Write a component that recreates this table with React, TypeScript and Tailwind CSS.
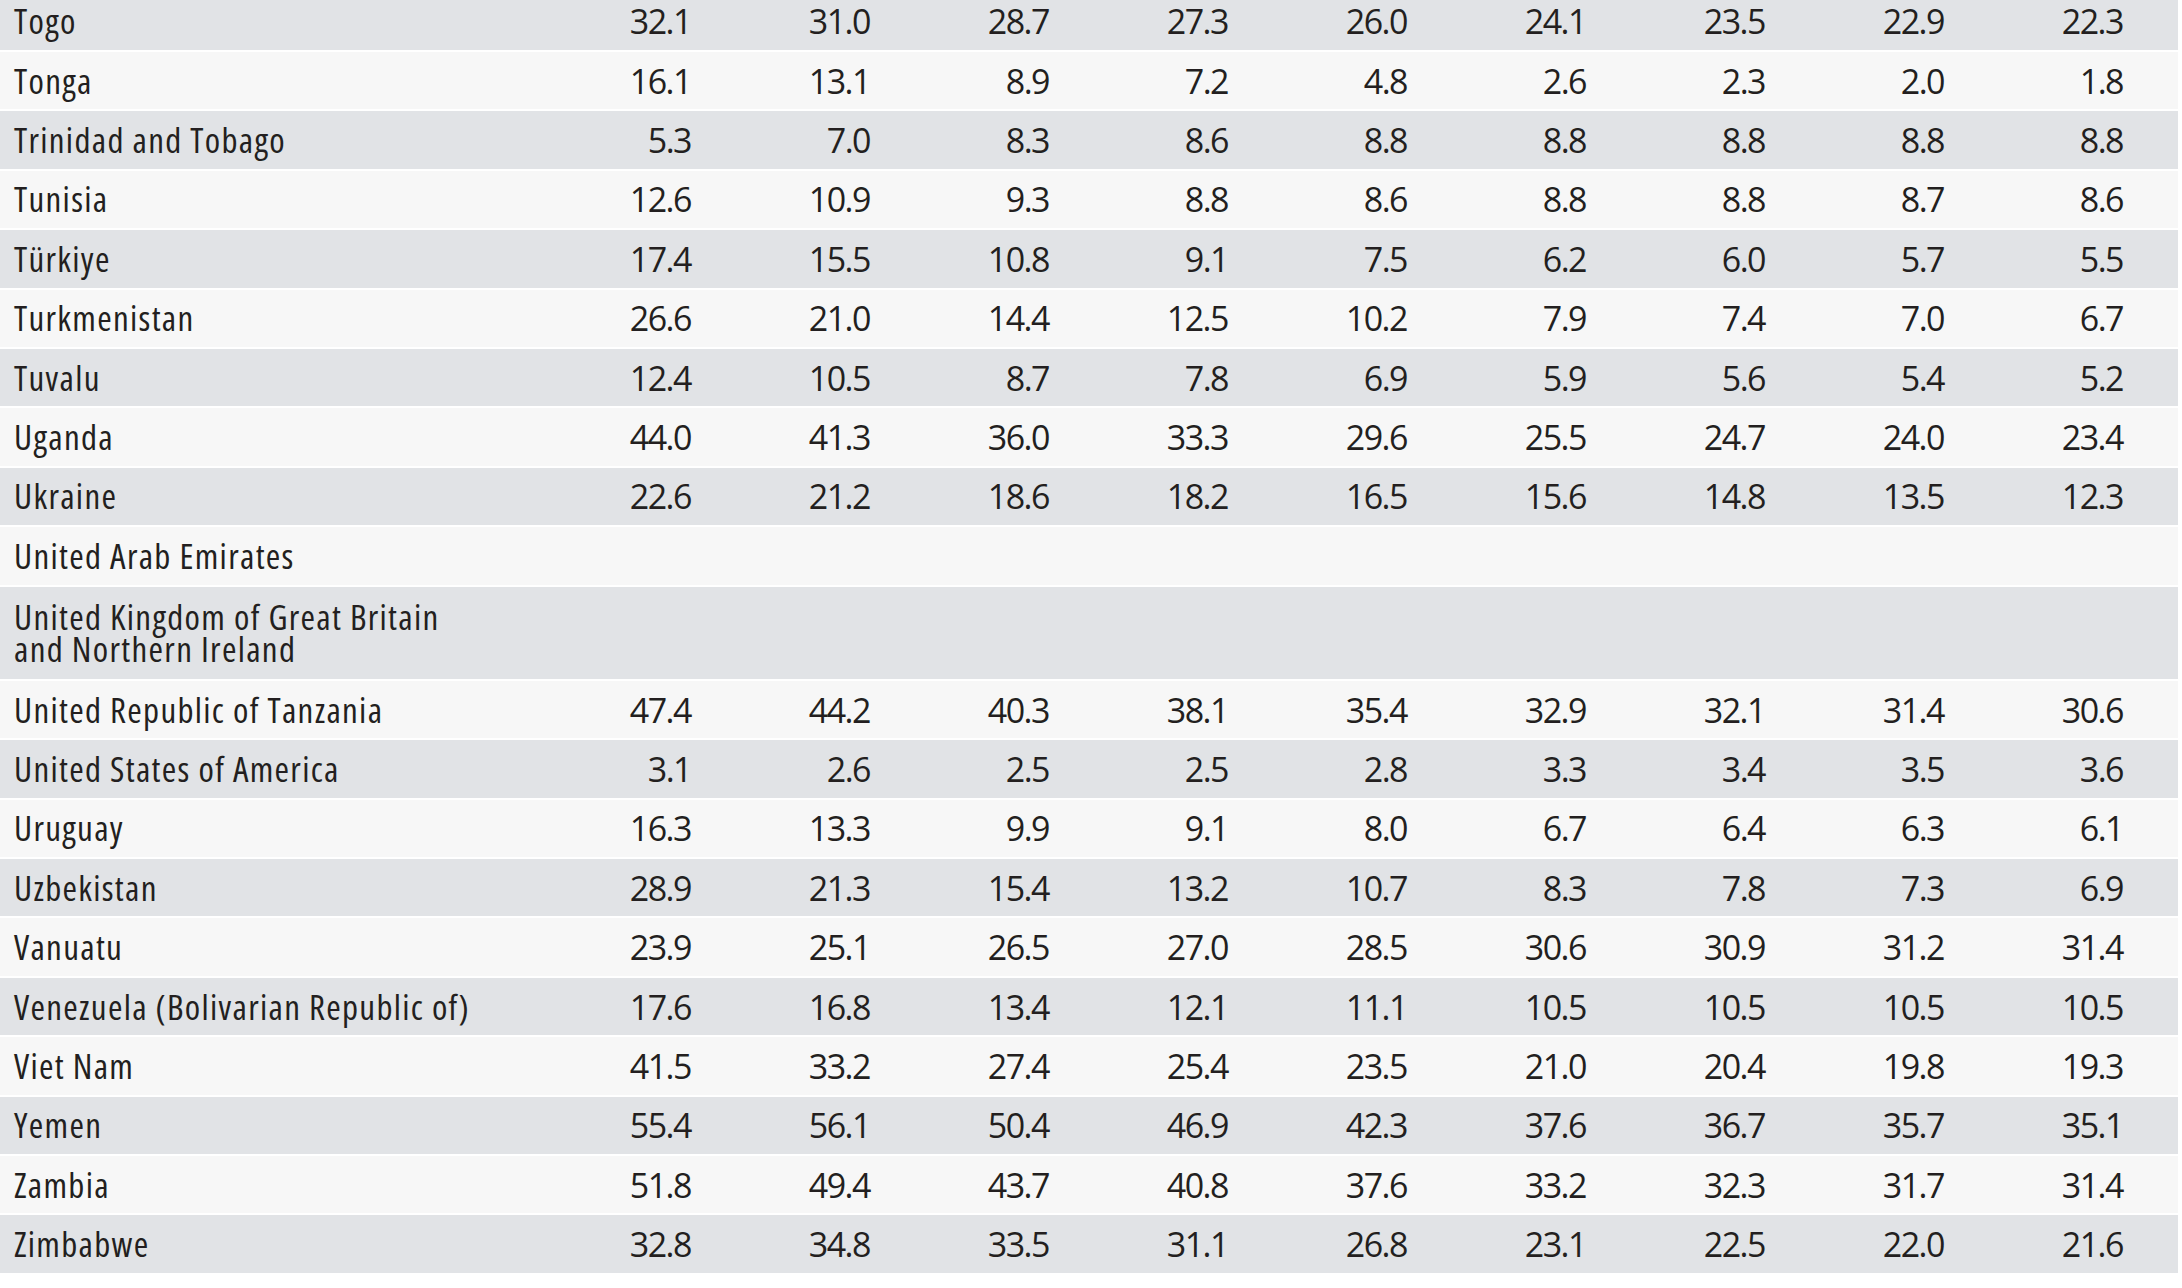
const rows: [string, string[]][] = [
  ["Togo", ["32.1", "31.0", "28.7", "27.3", "26.0", "24.1", "23.5", "22.9", "22.3"]],
  ["Tonga", ["16.1", "13.1", "8.9", "7.2", "4.8", "2.6", "2.3", "2.0", "1.8"]],
  ["Trinidad and Tobago", ["5.3", "7.0", "8.3", "8.6", "8.8", "8.8", "8.8", "8.8", "8.8"]],
  ["Tunisia", ["12.6", "10.9", "9.3", "8.8", "8.6", "8.8", "8.8", "8.7", "8.6"]],
  ["Türkiye", ["17.4", "15.5", "10.8", "9.1", "7.5", "6.2", "6.0", "5.7", "5.5"]],
  ["Turkmenistan", ["26.6", "21.0", "14.4", "12.5", "10.2", "7.9", "7.4", "7.0", "6.7"]],
  ["Tuvalu", ["12.4", "10.5", "8.7", "7.8", "6.9", "5.9", "5.6", "5.4", "5.2"]],
  ["Uganda", ["44.0", "41.3", "36.0", "33.3", "29.6", "25.5", "24.7", "24.0", "23.4"]],
  ["Ukraine", ["22.6", "21.2", "18.6", "18.2", "16.5", "15.6", "14.8", "13.5", "12.3"]],
  ["United Arab Emirates", []],
  ["United Kingdom of Great Britain\nand Northern Ireland", []],
  ["United Republic of Tanzania", ["47.4", "44.2", "40.3", "38.1", "35.4", "32.9", "32.1", "31.4", "30.6"]],
  ["United States of America", ["3.1", "2.6", "2.5", "2.5", "2.8", "3.3", "3.4", "3.5", "3.6"]],
  ["Uruguay", ["16.3", "13.3", "9.9", "9.1", "8.0", "6.7", "6.4", "6.3", "6.1"]],
  ["Uzbekistan", ["28.9", "21.3", "15.4", "13.2", "10.7", "8.3", "7.8", "7.3", "6.9"]],
  ["Vanuatu", ["23.9", "25.1", "26.5", "27.0", "28.5", "30.6", "30.9", "31.2", "31.4"]],
  ["Venezuela (Bolivarian Republic of)", ["17.6", "16.8", "13.4", "12.1", "11.1", "10.5", "10.5", "10.5", "10.5"]],
  ["Viet Nam", ["41.5", "33.2", "27.4", "25.4", "23.5", "21.0", "20.4", "19.8", "19.3"]],
  ["Yemen", ["55.4", "56.1", "50.4", "46.9", "42.3", "37.6", "36.7", "35.7", "35.1"]],
  ["Zambia", ["51.8", "49.4", "43.7", "40.8", "37.6", "33.2", "32.3", "31.7", "31.4"]],
  ["Zimbabwe", ["32.8", "34.8", "33.5", "31.1", "26.8", "23.1", "22.5", "22.0", "21.6"]],
]

export default function App() {
  return (
    <div className="min-h-[1288px] w-[2182px] overflow-hidden bg-white text-[#231f20] font-['Open_Sans',sans-serif] text-[34px]">
      <div className="w-[2178px]">
        {rows.map(([name, vals], i) => {
          const tall = name.includes("\n")
          // first row is cut by the top of the page
          const height = i === 0 ? "h-[52px] pb-[7.4px] " : tall ? "h-[94.4px] " : "h-[59.4px] "
          return (
            <div
              key={name}
              className={
                "grid grid-cols-[567px_repeat(9,179px)] items-center border-b-2 border-white " +
                height +
                (i % 2 === 0 ? "bg-[#e1e3e6]" : "bg-[#f7f7f7]")
              }
            >
              <div className="whitespace-pre-line pl-[14px] text-[35px] leading-[32px] tracking-[1.3px] font-stretch-condensed">
                {name}
              </div>
              {vals.map((v, j) => (
                <div key={j} className="pr-[55px] text-right leading-[32px] tracking-[-1.5px]">
                  {v}
                </div>
              ))}
            </div>
          )
        })}
      </div>
    </div>
  )
}
